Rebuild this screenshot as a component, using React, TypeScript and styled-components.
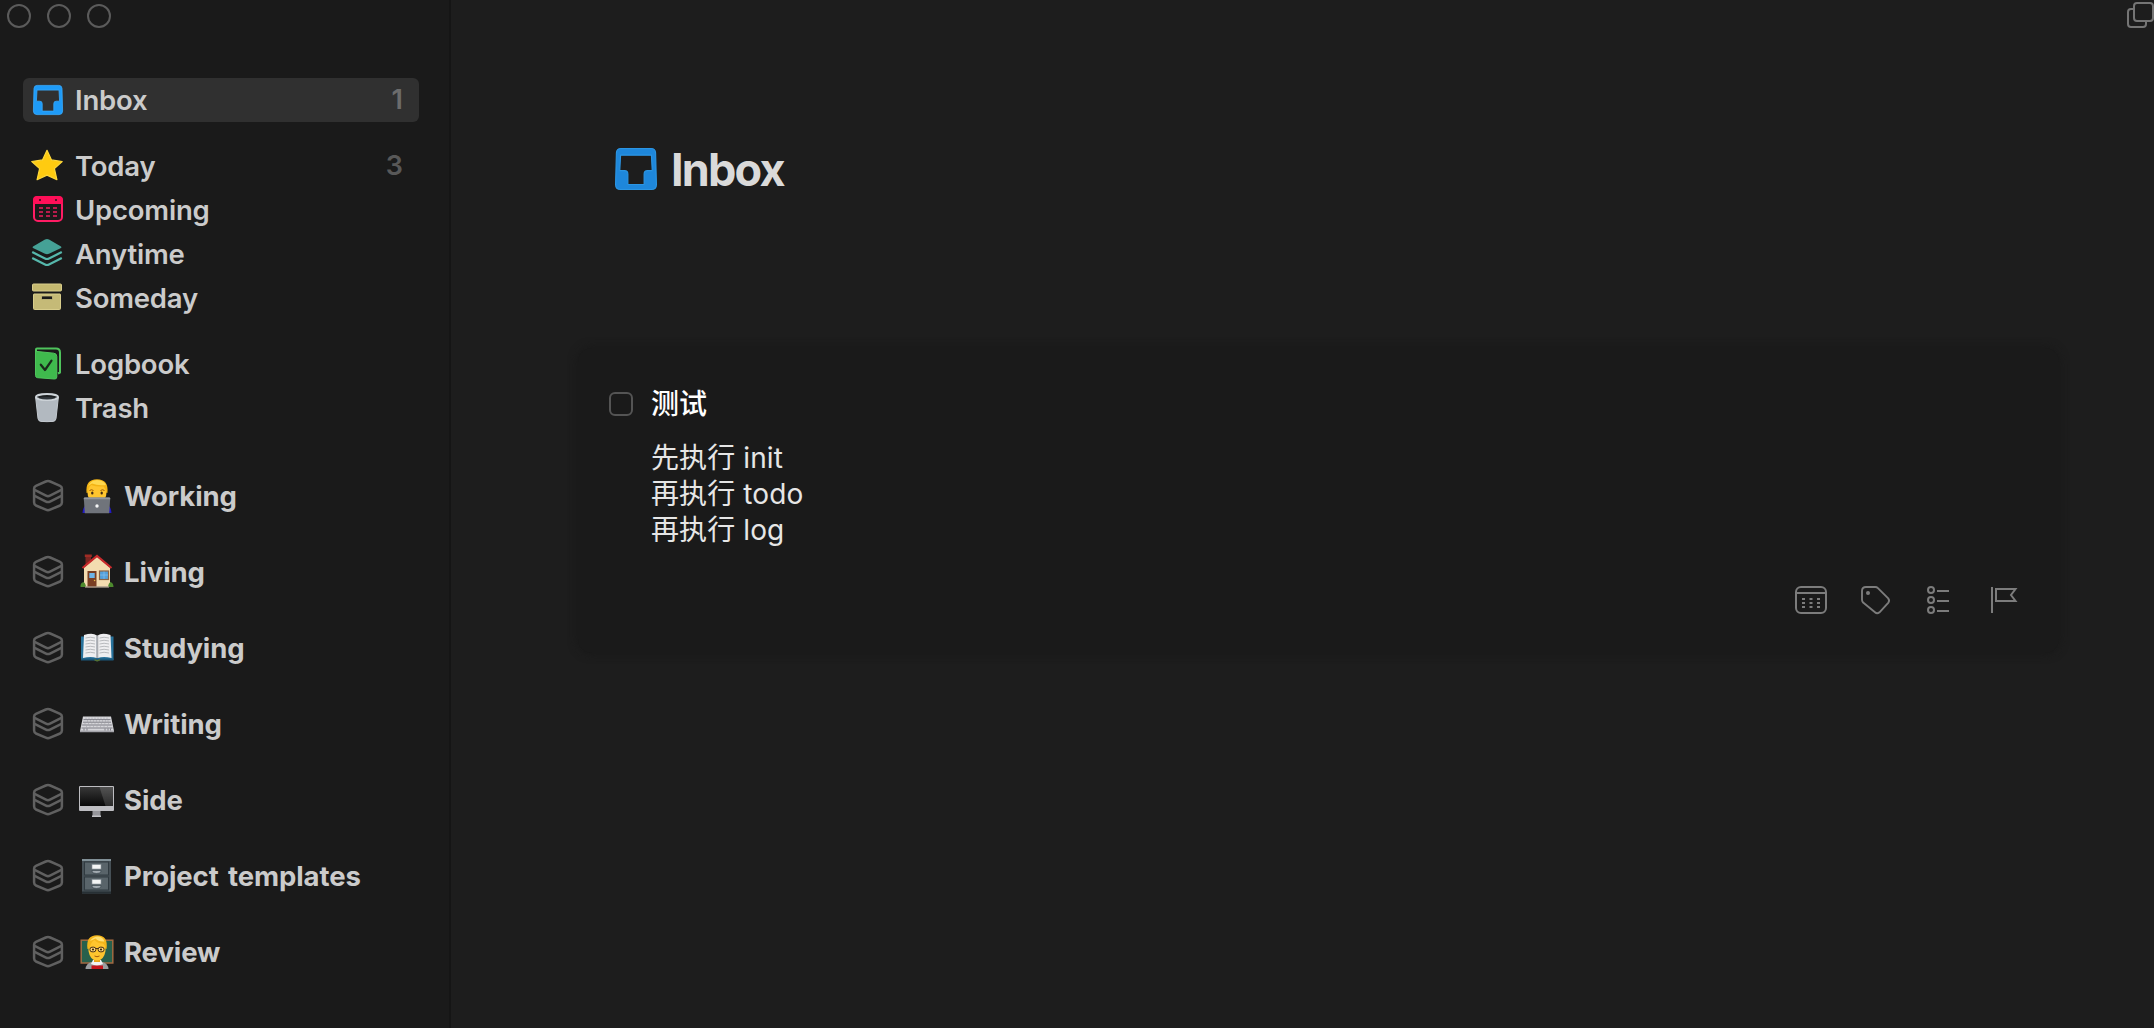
import React from 'react';
import styled, { createGlobalStyle } from 'styled-components';

const GlobalStyle = createGlobalStyle`
  * { box-sizing: border-box; }
  html, body { margin: 0; background: #1d1d1d; }
  body { font-family: Inter, "Noto Sans CJK SC", sans-serif; overflow: hidden; }
  svg { display: block; flex: none; overflow: visible; }
`;

const Window = styled.div`
  display: flex;
  width: 2154px;
  height: 1028px;
  background: #1d1d1d;
`;

const Sidebar = styled.aside`
  width: 451px;
  flex: none;
  display: flex;
  flex-direction: column;
  background: #1a1a1a;
  border-right: 2px solid #151515;
`;

const TrafficLights = styled.div`
  display: flex;
  gap: 16px;
  padding: 4px 7px 0;
  height: 78px;
`;

const Light = styled.span`
  width: 24px;
  height: 24px;
  border: 2px solid #5b5b5b;
  border-radius: 50%;
`;

const NavGroup = styled.nav<{ $gap: number }>`
  display: flex;
  flex-direction: column;
  padding: 0 30px 0 23px;
  margin-bottom: ${(p) => p.$gap}px;
`;

const NavRow = styled.div<{ $active?: boolean }>`
  display: flex;
  align-items: center;
  height: 44px;
  padding: 0 16px 0 8px;
  border-radius: 6px;
  background: ${(p) => (p.$active ? '#303030' : 'transparent')};
`;

const IconSlot = styled.span`
  width: 34px;
  height: 34px;
  flex: none;
`;

const NavLabel = styled.span`
  margin-left: 10px;
  font-size: 27.5px;
  line-height: 44px;
  font-weight: 600;
  letter-spacing: -0.2px;
  color: #cbcbcb;
  white-space: pre;
`;

const Count = styled.span<{ $active?: boolean }>`
  margin-left: auto;
  font-size: 27px;
  font-weight: 600;
  line-height: 44px;
  color: ${(p) => (p.$active ? '#6c6c6c' : '#585858')};
`;

const AreaList = styled.nav`
  display: flex;
  flex-direction: column;
  gap: 32px;
  padding-left: 31px;
`;

const AreaRow = styled.div`
  display: flex;
  align-items: center;
  height: 44px;
`;

const EmojiSlot = styled.span`
  width: 36px;
  height: 36px;
  margin-left: 14px;
`;

const AreaLabel = styled.span`
  margin-left: 9px;
  font-size: 27.5px;
  line-height: 44px;
  font-weight: 700;
  letter-spacing: -0.1px;
  word-spacing: 3px;
  color: #cbcbcb;
  white-space: pre;
`;

const Main = styled.main`
  flex: 1;
  display: flex;
  flex-direction: column;
`;

const TopBar = styled.div`
  display: flex;
  justify-content: flex-end;
  height: 139px;
  padding-top: 2px;
`;

const Heading = styled.header`
  display: flex;
  align-items: center;
  height: 60px;
  padding-left: 164px;
`;

const Title = styled.h1`
  margin: 2px 0 0 14px;
  font-size: 45px;
  line-height: 60px;
  font-weight: 700;
  letter-spacing: -1.8px;
  color: #dadada;
`;

const Card = styled.section`
  margin: 149px 95px 0 127px;
  height: 305px;
  padding: 34px 42px 38px 31px;
  display: flex;
  flex-direction: column;
  justify-content: space-between;
  border-radius: 14px;
  background: #1a1a1a;
  box-shadow: 0 0 8px 1px #191919;
`;

const Todo = styled.div`
  display: flex;
`;

const Checkbox = styled.span`
  width: 24px;
  height: 24px;
  margin-top: 10px;
  flex: none;
  border: 2px solid #545454;
  border-radius: 6px;
`;

const TodoBody = styled.div`
  display: flex;
  flex-direction: column;
  margin-left: 18px;
`;

const TodoTitle = styled.div`
  font-size: 28px;
  line-height: 44px;
  font-weight: 500;
  color: #fff;
`;

const Notes = styled.div`
  margin-top: 14px;
  font-size: 28px;
  line-height: 36px;
  letter-spacing: 0.1px;
  color: #e6e6e6;
`;

const Tools = styled.div`
  display: flex;
  justify-content: flex-end;
  align-items: flex-start;
`;

const Tool = styled.span<{ $w: number; $right?: number }>`
  width: ${(p) => p.$w}px;
  margin-right: ${(p) => p.$right ?? 0}px;
`;

const InboxIcon = ({ size = 34, title = false }: { size?: number; title?: boolean }) => {
  const fill = title ? '#1e87db' : '#1e9bf8';
  const edge = title ? '#2b95e3' : '#39a9fb';
  return (
    <svg width={size} height={size} viewBox={title ? '0 0 30 30' : '-2 -2 34 34'}>
      <path
        fillRule="evenodd"
        fill={fill}
        stroke={edge}
        strokeWidth="0.8"
        strokeLinejoin="round"
        d="M4.200.4h21.600q3 0 3.200 3l.6 22.600q0 3.600-3.600 3.600H4Q.4 29.600.4 26L1 3.400q.2-3 3.200-3ZM4 5.100 3.400 16.200h3.400q2.400 0 2.400 2.400v7.500h11.600v-7.500q0-2.400 2.400-2.400h3.400L26 5.100Z"
      />
    </svg>
  );
};

const StarIcon = () => (
  <svg width="34" height="34" viewBox="0 0.5 34 34">
    <path
      d="M16 1.8 20.5 11.4 31.2 13 23.4 20.1 25.9 31.2 16 26.6 6.1 31.2 8.6 20.1.8 13 11.5 11.4Z"
      fill="#ffcb10"
      stroke="#ffd93a"
      strokeWidth="1.2"
      strokeLinejoin="round"
    />
  </svg>
);

const dots = (xs: number[], ys: number[], w: number, fill: string) =>
  ys.flatMap((y) => xs.map((x) => <rect key={`${x}-${y}`} x={x} y={y} width={w} height="2" fill={fill} />));

const UpcomingIcon = () => (
  <svg width="34" height="34" viewBox="0 1 34 34">
    <rect x="3" y="5" width="28" height="24" rx="4" fill="none" stroke="#ff1c64" strokeWidth="2" />
    <path d="M2 12V8q0-4 4-4h22q4 0 4 4v4Z" fill="#ff0f58" />
    <rect x="8" y="7" width="2" height="2" fill="#5c1029" />
    <rect x="24" y="7" width="2" height="2" fill="#5c1029" />
    {dots([8, 15, 22], [15, 19, 23], 4, '#b71c4c')}
  </svg>
);

const AnytimeIcon = () => (
  <svg width="34" height="34" viewBox="0 0.700 34 34">
    <path d="M2 10.300 14 3.300q2-1.100 4 0l12 7q1 .7 0 1.400l-12 5.800q-2 .9-4 0l-12-5.800q-1-.7 0-1.400Z" fill="#45a196" />
    <path d="m1.200 15.800 12.800 6.400q2 1 4 0l12.800-6.400M1.200 21.800 14 28.200q2 1 4 0l12.800-6.400" fill="none" stroke="#56b8ac" strokeWidth="2.200" />
  </svg>
);

const SomedayIcon = () => (
  <svg width="34" height="34" viewBox="0 0.500 34 34">
    <rect x="1.500" y="3.500" width="29" height="7" rx="1" fill="#c4b86f" stroke="#d8cd8b" />
    <path d="M3 13.500h26q.5 0 .5.5v14q0 1-1 1h-25q-1 0-1-1V14q0-.5.5-.5Z" fill="#c5ba77" stroke="#d8cd8b" />
    <rect x="10.500" y="15.500" width="11" height="3.500" rx="1" fill="#1a1a1a" stroke="#d8cd8b" strokeWidth=".7" />
  </svg>
);

const LogbookIcon = () => (
  <svg width="34" height="34" viewBox="0 0.500 34 34">
    <path d="M5 7V3q0-1 1-1h19q4 0 4 4v20l-2 1" fill="none" stroke="#4fc45c" strokeWidth="2" strokeLinejoin="round" />
    <path d="m4.500 4.800 18.300 1.900q3 .3 3 3.300v20.500q0 2.200-2.400 2L6.500 31.200q-2-.2-2-2.200Z" fill="#3fba4d" stroke="#4fc45c" strokeWidth="1" />
    <path d="m9.800 18.200 4.200 5.300 6.500-9.400" fill="none" stroke="#1a2a1b" strokeWidth="2.200" strokeLinecap="round" strokeLinejoin="round" />
  </svg>
);

const TrashIcon = () => (
  <svg width="34" height="34" viewBox="0 0 34 34">
    <path d="M4.600 6 7 27.600q.3 2.600 3 2.800 6 .5 12 0 2.700-.2 3-2.800L27.400 6Z" fill="#b2b9c0" stroke="#c3c9cf" strokeWidth="1" />
    <ellipse cx="16" cy="6" rx="11" ry="2.900" fill="#1d2022" stroke="#ced4d9" strokeWidth="2" />
    <path d="M7.500 7.200q8.500 2.500 17 0-3-1.200-8.500-1.200t-8.500 1.200Z" fill="#30363b" />
  </svg>
);

const AreaIcon = () => (
  <svg width="34" height="34" viewBox="0 0 34 34" fill="none" stroke="#606060" strokeWidth="2.500" strokeLinejoin="round">
    <path d="M14.800 2.500q2.200-.9 4.400 0l9.900 4.300q1.800.8 1.800 2.800V23.600q0 1.900-1.800 2.900L19.200 30.700q-2.200.9-4.400 0L4.900 26.500Q3.100 25.500 3.100 23.600V9.600q0-2 1.800-2.800Z" />
    <path d="m3.600 10.800 11.400 5.900q2 1 4 0l11.400-5.900M3.600 16.800 15 22.600q2 1 4 0L30.400 16.800" />
  </svg>
);

const Technologist = () => (
  <svg width="36" height="36" viewBox="0 0 36 36">
    <path d="M3.500 35q.5-8 6-9h17q5.500 1 6 9Z" fill="#2119c4" />
    <rect x="13" y="16" width="10" height="8" fill="#e9a31a" />
    <path d="M8.300 12q0-10 9.700-10t9.700 10l-.6 6q-2 6-9.100 6t-9.100-6Z" fill="#ffc52e" />
    <path d="M7.600 15Q6 1.500 18 1.200 30 1.500 28.400 15l-1.500-.5q.2-4-2.300-6-7 .5-12.400-1.500-3.200 2.500-3 7.500Z" fill="#f3b416" />
    <path d="M9 8q3-6 9-6 7 .3 9 5-8 1-14-1.500Q10 7 9 8Z" fill="#ffd84e" />
    <path d="M10.500 12.500q2-1.500 4 0M21.500 12.500q2-1.500 4 0" fill="none" stroke="#9b5c09" strokeWidth="1" />
    <ellipse cx="13.300" cy="15" rx="1.200" ry="1.600" fill="#402b13" />
    <ellipse cx="22.700" cy="15" rx="1.200" ry="1.600" fill="#402b13" />
    <path d="M4.800 20.500q0-1 1-1h24.400q1 0 1 1L30.200 35.200H5.800Z" fill="#70747b" />
    <path d="M4.800 20.500q0-1 1-1h24.400q1 0 1 1v.8H4.800Z" fill="#93979d" />
    <circle cx="18" cy="28" r="1.700" fill="#f5f6f7" />
  </svg>
);

const House = () => (
  <svg width="36" height="36" viewBox="0 0.500 36 36">
    <rect x="6.500" y="1.500" width="5.500" height="10" fill="#7d2622" />
    <rect x="5.800" y="1" width="7" height="2.500" fill="#a02c25" />
    <path d="M5 14 18 3l13 11v19.500H5Z" fill="#f3dcb0" />
    <path d="M3.500 14.500 18 2.500l14.500 12" fill="none" stroke="#c92a2c" strokeWidth="2.200" />
    <path d="M1.500 33.500q-.5-4 3-5 2 1 2.500 5ZM29 33.500q.5-4 2.500-5 3 1 3 5Z" fill="#4d8a2e" />
    <rect x="8.500" y="17.500" width="9" height="16.500" fill="#7a3f23" />
    <rect x="10.300" y="19.500" width="5.400" height="5" fill="#6eb5e8" />
    <circle cx="15.600" cy="27" r=".8" fill="#e4b84b" />
    <rect x="20.500" y="17.500" width="9" height="8.500" fill="#52a0dc" stroke="#8c6444" strokeWidth="1.200" />
    <path d="M25 18v7.500M21 21.500h8" stroke="#87bfe8" strokeWidth=".7" />
    <path d="M6 33.500h24" stroke="#a5998a" strokeWidth="1.400" />
  </svg>
);

const Book = () => (
  <svg width="36" height="36" viewBox="0 0 36 36">
    <path d="M2 6.500h32.500V30H2Z" fill="#28729b" />
    <path d="M2 28.500h32.500V30.500H21q-3 1.500-6 0H2Z" fill="#1b587c" />
    <path d="M5 5q9-2.500 12.800.5V28q-6-2-13.800 0ZM31.500 5q-9-2.500-12.800.5V28q6-2 13.800 0Z" fill="#eeeef0" />
    <path d="M17.300 5.500h2V28h-2Z" fill="#a9abb0" />
    <g stroke="#b1b3b7" strokeWidth=".9" fill="none">
      {[8, 11, 14, 17, 20, 23].map((y) => (
        <path key={y} d={`M6.500 ${y}q5-1.500 9.500 0M20.500 ${y}q4.500-1.500 9.500 0`} />
      ))}
    </g>
    <path d="M15.500 29.500q2.700 2.500 5.500 0" fill="none" stroke="#56702f" strokeWidth="1.500" />
  </svg>
);

const Keyboard = () => (
  <svg width="36" height="36" viewBox="0 0 36 36">
    <path d="M4 10.500h28L35 25H1Z" fill="#d6d6da" />
    <path d="M1 24.500h34v1.800H1Z" fill="#a5a5ab" />
    <g stroke="#77777f" strokeWidth=".9">
      <path d="M4.500 13.600h27M4 16.200h28M3.200 19h29.600M2.500 22h31" />
      <path d="M7 11.500v2M10 11.500v2M13 11.500v2M16 11.500v2M19 11.500v2M22 11.500v2M25 11.500v2M28 11.500v2M8.500 14v2M11.500 14v2M14.500 14v2M17.500 14v2M20.500 14v2M23.500 14v2M26.500 14v2M29 14v2M6 16.700v2M9.500 16.700v2M12.800 16.700v2M16 16.700v2M19.200 16.700v2M22.500 16.700v2M25.800 16.700v2M29.500 16.700v2M7.500 19.500v2M11 19.500v2M14.500 19.500v2M18 19.500v2M21.500 19.500v2M25 19.500v2M28.500 19.500v2" stroke="#a2a2a8" strokeWidth=".6" />
      <path d="M5 22.500v2M8 22.500v2M26 22.500v2M29 22.500v2M31.500 22.500v2" />
    </g>
  </svg>
);

const Desktop = () => (
  <svg width="36" height="36" viewBox="0.500 0 36 36">
    <defs>
      <linearGradient id="screen" x1="0" y1="0" x2="0" y2="1">
        <stop stopColor="#373737" />
        <stop offset="1" stopColor="#080808" />
      </linearGradient>
    </defs>
    <rect x=".5" y="4" width="35" height="25" rx="1" fill="#bdbdc1" />
    <rect x="1.500" y="5" width="33" height="19" fill="url(#screen)" />
    <path d="M21 5h13.500v19h-7.500Z" fill="#fff" opacity=".14" />
    <path d="M14 29h8v5.500h-8Z" fill="#96969b" />
    <path d="M13.500 33.500h9v1.500h-9Z" fill="#c2c2c6" />
  </svg>
);

const Cabinet = () => (
  <svg width="36" height="36" viewBox="0.500 0 36 36">
    <rect x="3.500" y="1" width="29" height="34.500" fill="#465056" />
    <rect x="3.500" y="1" width="29" height="2" fill="#819097" />
    {[4, 19].map((y) => (
      <g key={y}>
        <rect x="6" y={y} width="24" height="13" fill="#59646a" stroke="#303a40" />
        <rect x="13.500" y={y + 2.5} width="9" height="4.500" fill="#f4f5f5" stroke="#89939a" strokeWidth=".6" />
        <path d={`M13.500 ${y + 8.5}h9v1q-1 2-4.500 2t-4.500-2Z`} fill="#a1aab0" stroke="#273038" strokeWidth=".5" />
      </g>
    ))}
    <rect x="3.500" y="33.500" width="29" height="2" fill="#273035" />
  </svg>
);

const Teacher = () => (
  <svg width="36" height="36" viewBox="0 0 36 36">
    <rect x="2.200" y="6.200" width="31.600" height="22.800" fill="#28604c" stroke="#a26a42" strokeWidth="1.500" />
    <path d="M6.500 35q.5-5.500 6-7h11q5.500 1.500 6 7Z" fill="#9b9da0" />
    <path d="M14 26h8l2 4-6 2-6-2Z" fill="#f3f3f3" />
    <rect x="15" y="22" width="6" height="6" fill="#e9a31a" />
    <path d="M9.500 11q0-9 8.500-9t8.500 9v6q-1.500 9.500-8.500 9.500T9.500 17Z" fill="#ffc52e" />
    <path d="M8.500 15Q6.500 1.500 18 1.200 29.500 1.500 27.500 15l-1.400-.5q.2-4-2.500-5-5 0-8.100-3.500-4 2-4.700 8.500Z" fill="#f5b61b" />
    <path d="M11 7q3-4.500 8-4.500 5 .5 6.500 5-6 .5-9-3-2.500 1-5.500 2.500Z" fill="#ffe072" />
    <rect x="11" y="13.200" width="5.800" height="4.600" rx="2" fill="#ffd878" stroke="#493019" strokeWidth="1" />
    <rect x="19.200" y="13.200" width="5.800" height="4.600" rx="2" fill="#ffd878" stroke="#493019" strokeWidth="1" />
    <path d="M16.800 14.500h2.400" stroke="#493019" strokeWidth="1" />
    <circle cx="14" cy="15.500" r="1.100" fill="#3e2815" />
    <circle cx="22" cy="15.500" r="1.100" fill="#3e2815" />
    <path d="M15.500 22q2.500 1.500 5 0" fill="none" stroke="#a55b0c" strokeWidth="1" />
    <path d="M12.500 31.500h11.500V35h-11.500Z" fill="#c5131c" />
  </svg>
);

const CalendarTool = () => (
  <svg width="32" height="28" viewBox="0 0 32 28" fill="none" stroke="#7c7c7c" strokeWidth="2">
    <rect x="1" y="1" width="30" height="26" rx="5" />
    <path d="M2 7h28" />
    <g stroke="none">{dots([7, 14.5, 22], [12, 16, 20], 3, '#7c7c7c')}</g>
  </svg>
);

const TagTool = () => (
  <svg width="29" height="29" viewBox="0 0 29 29" fill="none" stroke="#7c7c7c" strokeWidth="1.900" strokeLinejoin="round">
    <path d="M5 1h9.300q1.500 0 2.600 1.100l10.300 10.300q1.800 2.300 0 4.400L18.500 26.300q-2.400 2-4.500 0L2.100 16.600Q1 15.300 1 13.700V5q0-4 4-4Z" />
    <circle cx="7" cy="7" r="2" fill="#7c7c7c" stroke="none" />
  </svg>
);

const ChecklistTool = () => (
  <svg width="23" height="28" viewBox="0 0 23 28" fill="none" stroke="#7c7c7c" strokeWidth="2">
    {[4, 14, 24].map((y) => (
      <g key={y}>
        <circle cx="4" cy={y} r="3" />
        <path d={`M10 ${y + 1}h12`} />
      </g>
    ))}
  </svg>
);

const FlagTool = () => (
  <svg width="26" height="28" viewBox="0 0 26 28" fill="none" stroke="#7c7c7c" strokeWidth="2">
    <path d="M1 1v26M5 3h19.500l-4.500 6 4.500 6H5Z" />
  </svg>
);

const WindowsIcon = () => (
  <svg width="27" height="27" viewBox="0 0 27 27" fill="none" stroke="#757575" strokeWidth="2">
    <path d="M7 7H4Q1 7 1 10v12q0 3 3 3h12q3 0 3-3v-3" />
    <rect x="7" y="1" width="19" height="18" rx="3" />
  </svg>
);

type Item = { label: string; icon: React.ReactNode; count?: number; active?: boolean };

const groups: { gap: number; items: Item[] }[] = [
  { gap: 22, items: [{ label: 'Inbox', icon: <InboxIcon />, count: 1, active: true }] },
  {
    gap: 22,
    items: [
      { label: 'Today', icon: <StarIcon />, count: 3 },
      { label: 'Upcoming', icon: <UpcomingIcon /> },
      { label: 'Anytime', icon: <AnytimeIcon /> },
      { label: 'Someday', icon: <SomedayIcon /> },
    ],
  },
  {
    gap: 44,
    items: [
      { label: 'Logbook', icon: <LogbookIcon /> },
      { label: 'Trash', icon: <TrashIcon /> },
    ],
  },
];

const areas: { label: string; emoji: React.ReactNode }[] = [
  { label: 'Working', emoji: <Technologist /> },
  { label: 'Living', emoji: <House /> },
  { label: 'Studying', emoji: <Book /> },
  { label: 'Writing', emoji: <Keyboard /> },
  { label: 'Side', emoji: <Desktop /> },
  { label: 'Project templates', emoji: <Cabinet /> },
  { label: 'Review', emoji: <Teacher /> },
];

const notes = ['先执行 init', '再执行 todo', '再执行 log'];

export default function App() {
  return (
    <Window>
      <GlobalStyle />
      <Sidebar>
        <TrafficLights>
          <Light />
          <Light />
          <Light />
        </TrafficLights>
        {groups.map((group, i) => (
          <NavGroup key={i} $gap={group.gap}>
            {group.items.map((item) => (
              <NavRow key={item.label} $active={item.active}>
                <IconSlot>{item.icon}</IconSlot>
                <NavLabel>{item.label}</NavLabel>
                {item.count !== undefined && <Count $active={item.active}>{item.count}</Count>}
              </NavRow>
            ))}
          </NavGroup>
        ))}
        <AreaList>
          {areas.map((area) => (
            <AreaRow key={area.label}>
              <IconSlot>
                <AreaIcon />
              </IconSlot>
              <EmojiSlot>{area.emoji}</EmojiSlot>
              <AreaLabel>{area.label}</AreaLabel>
            </AreaRow>
          ))}
        </AreaList>
      </Sidebar>
      <Main>
        <TopBar>
          <WindowsIcon />
        </TopBar>
        <Heading>
          <InboxIcon size={42} title />
          <Title>Inbox</Title>
        </Heading>
        <Card>
          <Todo>
            <Checkbox />
            <TodoBody>
              <TodoTitle>测试</TodoTitle>
              <Notes>
                {notes.map((line) => (
                  <div key={line}>{line}</div>
                ))}
              </Notes>
            </TodoBody>
          </Todo>
          <Tools>
            <Tool $w={32} $right={34}>
              <CalendarTool />
            </Tool>
            <Tool $w={29} $right={37}>
              <TagTool />
            </Tool>
            <Tool $w={23} $right={41}>
              <ChecklistTool />
            </Tool>
            <Tool $w={26}>
              <FlagTool />
            </Tool>
          </Tools>
        </Card>
      </Main>
    </Window>
  );
}
